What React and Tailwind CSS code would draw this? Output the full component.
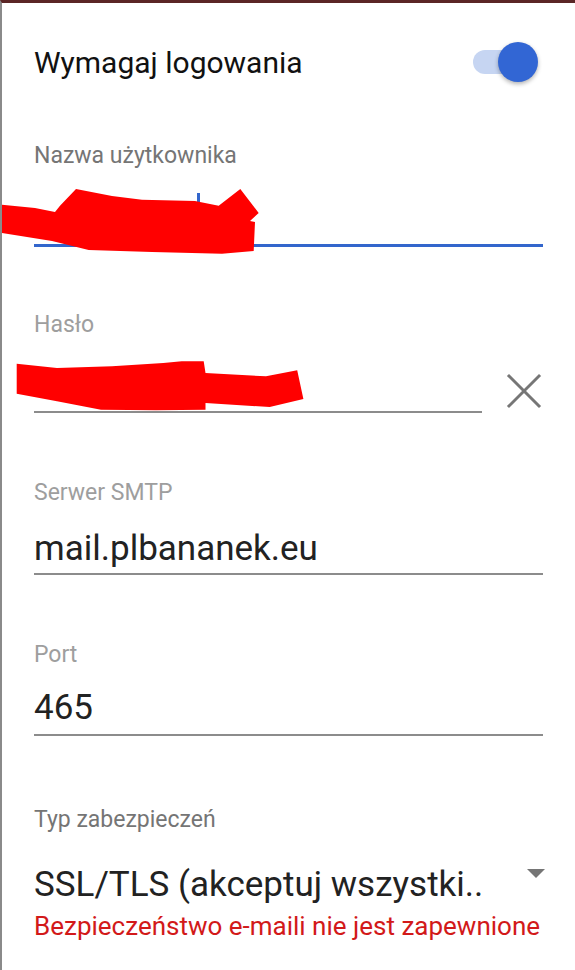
import React from "react";

function Label({ children, className = "" }) {
  return (
    <div className={`text-[23px] leading-[26px] ${className}`}>{children}</div>
  );
}

export default function App() {
  return (
    <div
      className="relative w-[575px] h-[970px] overflow-hidden bg-white border-t-[3px] border-t-[#5b2626] border-l-2 border-l-[#8a8a8a]"
      style={{ fontFamily: "Roboto, 'Noto Sans', sans-serif" }}
    >
      <div className="pl-[32px] pr-[32px]">
        {/* Toggle row */}
        <div className="flex items-center justify-between h-[80px] mt-[19px]">
          <span className="text-[30px] text-[#111]">Wymagaj logowania</span>
          <div className="relative w-[66px] h-[40px] mr-[5px] flex items-center">
            <div className="ml-[1px] w-[57px] h-[24px] rounded-full bg-[#c6d5f2]" />
            <div className="absolute right-0 top-0 w-[40px] h-[40px] rounded-full bg-[#3266d4] shadow-[0_2px_4px_rgba(0,0,0,0.3)]" />
          </div>
        </div>

        {/* Username */}
        <Label className="mt-[41px] text-[#757575]">Nazwa użytkownika</Label>
        <div className="relative h-[78px] border-b-[3px] border-b-[#3366cc]">
          <div className="absolute left-[163px] top-[24px] w-[3px] h-[22px] bg-[#3366cc]" />
        </div>

        {/* Password */}
        <Label className="mt-[65px] text-[#9e9e9e]">Hasło</Label>
        <div className="flex items-end gap-[24px]">
          <div className="flex-1 h-[75px] border-b-2 border-b-[#8c8c8c]" />
          <svg width="36" height="36" viewBox="0 0 36 36" className="mb-[4px] mr-[1px]">
            <path d="M3 3 L33 33 M33 3 L3 33" stroke="#767676" strokeWidth="3" strokeLinecap="square" />
          </svg>
        </div>

        {/* SMTP */}
        <Label className="mt-[67px] text-[#9e9e9e]">Serwer SMTP</Label>
        <div className="mt-[23px] h-[46px] border-b-2 border-b-[#8c8c8c] text-[35px] leading-[40px] text-[#222]">
          mail.plbananek.eu
        </div>

        {/* Port */}
        <Label className="mt-[67px] text-[#9e9e9e]">Port</Label>
        <div className="mt-[20px] h-[48px] border-b-2 border-b-[#8c8c8c] text-[35px] leading-[40px] text-[#222]">
          465
        </div>

        {/* Security type */}
        <Label className="mt-[71px] text-[#757575]">Typ zabezpieczeń</Label>
        <div className="mt-[32px] flex items-start justify-between">
          <span className="text-[35px] leading-[40px] text-[#222]">SSL/TLS (akceptuj wszystki..</span>
          <svg width="18" height="10" viewBox="0 0 18 10" className="mt-[4px] mr-[-2px]">
            <path d="M0 0 L18 0 L9 9 Z" fill="#757575" />
          </svg>
        </div>
        <div className="mt-[6px] text-[26px] leading-[30px] text-[#d21919]">
          Bezpieczeństwo e-maili nie jest zapewnione
        </div>
      </div>

      {/* Redaction scribbles */}
      <svg className="absolute left-0 top-0 pointer-events-none" width="575" height="970" viewBox="0 0 575 970">
        <path
          d="M0 201.7 L33 205 L53 209 L58 202.7 L74 186 L110 193 L140 196.7 L193 198 L216.7 202.7 L238.3 186 L256.7 210 L248 218 L253 219 L251.7 248 L220 250.7 L150 249 L86.7 247 L50 238 L0 230 Z"
          fill="#ff0000"
        />
        <path
          d="M14.7 360.7 L55 365 L110 363.3 L161.3 360 L179.7 358.3 L201.7 358.3 L203.5 370 L264 373.3 L295.2 367.3 L301.4 396 L267.7 404 L203.5 400 L203.5 406.7 L154 407.3 L99 406.7 L55 398.3 L14.7 390.7 Z"
          fill="#ff0000"
        />
      </svg>
    </div>
  );
}
